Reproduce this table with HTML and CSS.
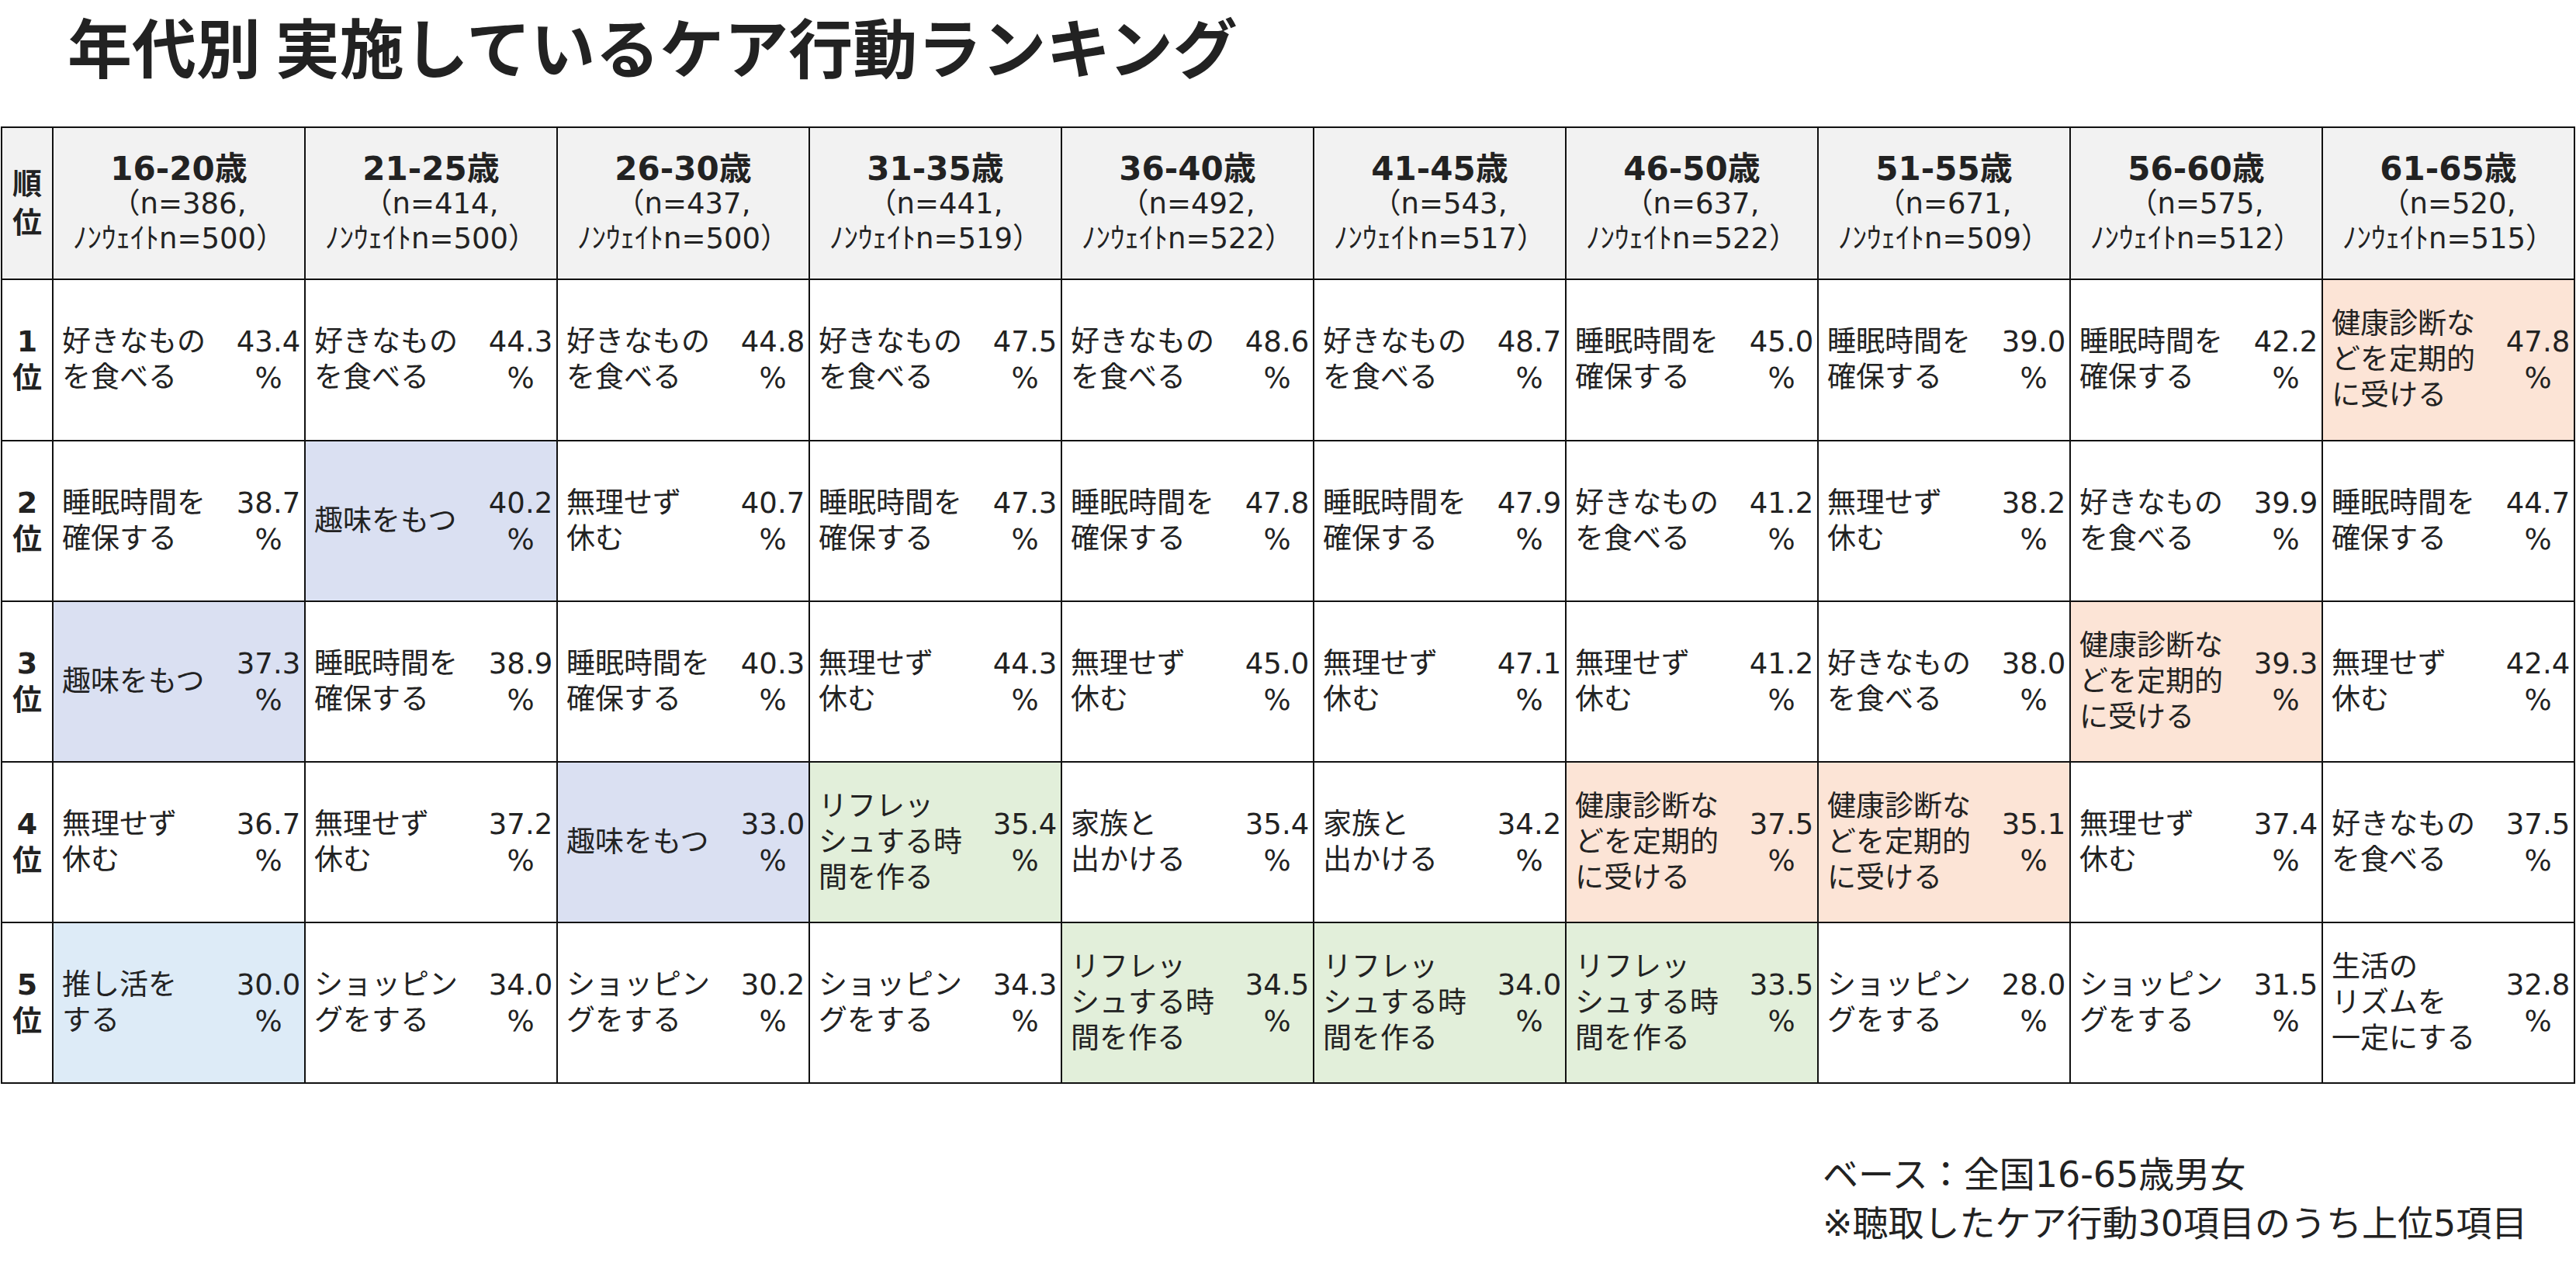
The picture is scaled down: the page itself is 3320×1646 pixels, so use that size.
FILE: index.html
```html
<!DOCTYPE html>
<html lang="ja">
<head>
<meta charset="utf-8">
<title>年代別 実施しているケア行動ランキング</title>
<link rel="stylesheet" href="styles.css">
</head>
<body>
<h1 class="title">年代別 実施しているケア行動ランキング</h1>
<div class="grid">
  <div class="rank head-bg">順<br>位</div>
  <div class="head"><span class="age">16-20歳</span><span>（n=386,</span><span>ﾉﾝｳｪｲﾄn=500）</span></div>
  <div class="head"><span class="age">21-25歳</span><span>（n=414,</span><span>ﾉﾝｳｪｲﾄn=500）</span></div>
  <div class="head"><span class="age">26-30歳</span><span>（n=437,</span><span>ﾉﾝｳｪｲﾄn=500）</span></div>
  <div class="head"><span class="age">31-35歳</span><span>（n=441,</span><span>ﾉﾝｳｪｲﾄn=519）</span></div>
  <div class="head"><span class="age">36-40歳</span><span>（n=492,</span><span>ﾉﾝｳｪｲﾄn=522）</span></div>
  <div class="head"><span class="age">41-45歳</span><span>（n=543,</span><span>ﾉﾝｳｪｲﾄn=517）</span></div>
  <div class="head"><span class="age">46-50歳</span><span>（n=637,</span><span>ﾉﾝｳｪｲﾄn=522）</span></div>
  <div class="head"><span class="age">51-55歳</span><span>（n=671,</span><span>ﾉﾝｳｪｲﾄn=509）</span></div>
  <div class="head"><span class="age">56-60歳</span><span>（n=575,</span><span>ﾉﾝｳｪｲﾄn=512）</span></div>
  <div class="head"><span class="age">61-65歳</span><span>（n=520,</span><span>ﾉﾝｳｪｲﾄn=515）</span></div>

  <div class="rank">1<br>位</div>
  <div class="cell"><div class="label">好きなもの<br>を食べる</div><div class="pct">43.4<br>%</div></div>
  <div class="cell"><div class="label">好きなもの<br>を食べる</div><div class="pct">44.3<br>%</div></div>
  <div class="cell"><div class="label">好きなもの<br>を食べる</div><div class="pct">44.8<br>%</div></div>
  <div class="cell"><div class="label">好きなもの<br>を食べる</div><div class="pct">47.5<br>%</div></div>
  <div class="cell"><div class="label">好きなもの<br>を食べる</div><div class="pct">48.6<br>%</div></div>
  <div class="cell"><div class="label">好きなもの<br>を食べる</div><div class="pct">48.7<br>%</div></div>
  <div class="cell"><div class="label">睡眠時間を<br>確保する</div><div class="pct">45.0<br>%</div></div>
  <div class="cell"><div class="label">睡眠時間を<br>確保する</div><div class="pct">39.0<br>%</div></div>
  <div class="cell"><div class="label">睡眠時間を<br>確保する</div><div class="pct">42.2<br>%</div></div>
  <div class="cell peach"><div class="label">健康診断な<br>どを定期的<br>に受ける</div><div class="pct">47.8<br>%</div></div>

  <div class="rank">2<br>位</div>
  <div class="cell"><div class="label">睡眠時間を<br>確保する</div><div class="pct">38.7<br>%</div></div>
  <div class="cell lav"><div class="label">趣味をもつ</div><div class="pct">40.2<br>%</div></div>
  <div class="cell"><div class="label">無理せず<br>休む</div><div class="pct">40.7<br>%</div></div>
  <div class="cell"><div class="label">睡眠時間を<br>確保する</div><div class="pct">47.3<br>%</div></div>
  <div class="cell"><div class="label">睡眠時間を<br>確保する</div><div class="pct">47.8<br>%</div></div>
  <div class="cell"><div class="label">睡眠時間を<br>確保する</div><div class="pct">47.9<br>%</div></div>
  <div class="cell"><div class="label">好きなもの<br>を食べる</div><div class="pct">41.2<br>%</div></div>
  <div class="cell"><div class="label">無理せず<br>休む</div><div class="pct">38.2<br>%</div></div>
  <div class="cell"><div class="label">好きなもの<br>を食べる</div><div class="pct">39.9<br>%</div></div>
  <div class="cell"><div class="label">睡眠時間を<br>確保する</div><div class="pct">44.7<br>%</div></div>

  <div class="rank">3<br>位</div>
  <div class="cell lav"><div class="label">趣味をもつ</div><div class="pct">37.3<br>%</div></div>
  <div class="cell"><div class="label">睡眠時間を<br>確保する</div><div class="pct">38.9<br>%</div></div>
  <div class="cell"><div class="label">睡眠時間を<br>確保する</div><div class="pct">40.3<br>%</div></div>
  <div class="cell"><div class="label">無理せず<br>休む</div><div class="pct">44.3<br>%</div></div>
  <div class="cell"><div class="label">無理せず<br>休む</div><div class="pct">45.0<br>%</div></div>
  <div class="cell"><div class="label">無理せず<br>休む</div><div class="pct">47.1<br>%</div></div>
  <div class="cell"><div class="label">無理せず<br>休む</div><div class="pct">41.2<br>%</div></div>
  <div class="cell"><div class="label">好きなもの<br>を食べる</div><div class="pct">38.0<br>%</div></div>
  <div class="cell peach"><div class="label">健康診断な<br>どを定期的<br>に受ける</div><div class="pct">39.3<br>%</div></div>
  <div class="cell"><div class="label">無理せず<br>休む</div><div class="pct">42.4<br>%</div></div>

  <div class="rank">4<br>位</div>
  <div class="cell"><div class="label">無理せず<br>休む</div><div class="pct">36.7<br>%</div></div>
  <div class="cell"><div class="label">無理せず<br>休む</div><div class="pct">37.2<br>%</div></div>
  <div class="cell lav"><div class="label">趣味をもつ</div><div class="pct">33.0<br>%</div></div>
  <div class="cell green"><div class="label">リフレッ<br>シュする時<br>間を作る</div><div class="pct">35.4<br>%</div></div>
  <div class="cell"><div class="label">家族と<br>出かける</div><div class="pct">35.4<br>%</div></div>
  <div class="cell"><div class="label">家族と<br>出かける</div><div class="pct">34.2<br>%</div></div>
  <div class="cell peach"><div class="label">健康診断な<br>どを定期的<br>に受ける</div><div class="pct">37.5<br>%</div></div>
  <div class="cell peach"><div class="label">健康診断な<br>どを定期的<br>に受ける</div><div class="pct">35.1<br>%</div></div>
  <div class="cell"><div class="label">無理せず<br>休む</div><div class="pct">37.4<br>%</div></div>
  <div class="cell"><div class="label">好きなもの<br>を食べる</div><div class="pct">37.5<br>%</div></div>

  <div class="rank">5<br>位</div>
  <div class="cell sky"><div class="label">推し活を<br>する</div><div class="pct">30.0<br>%</div></div>
  <div class="cell"><div class="label">ショッピン<br>グをする</div><div class="pct">34.0<br>%</div></div>
  <div class="cell"><div class="label">ショッピン<br>グをする</div><div class="pct">30.2<br>%</div></div>
  <div class="cell"><div class="label">ショッピン<br>グをする</div><div class="pct">34.3<br>%</div></div>
  <div class="cell green"><div class="label">リフレッ<br>シュする時<br>間を作る</div><div class="pct">34.5<br>%</div></div>
  <div class="cell green"><div class="label">リフレッ<br>シュする時<br>間を作る</div><div class="pct">34.0<br>%</div></div>
  <div class="cell green"><div class="label">リフレッ<br>シュする時<br>間を作る</div><div class="pct">33.5<br>%</div></div>
  <div class="cell"><div class="label">ショッピン<br>グをする</div><div class="pct">28.0<br>%</div></div>
  <div class="cell"><div class="label">ショッピン<br>グをする</div><div class="pct">31.5<br>%</div></div>
  <div class="cell"><div class="label">生活の<br>リズムを<br>一定にする</div><div class="pct">32.8<br>%</div></div>
</div>
<div class="note">
  <p class="note-line">ベース：全国16-65歳男女</p>
  <p class="note-line">※聴取したケア行動30項目のうち上位5項目</p>
</div>
</body>
</html>
```

FILE: styles.css
```css
* {
  box-sizing: border-box;
}

body {
  margin: 0;
  background: #ffffff;
  color: #222222;
  font-family: "DejaVu Sans", "Noto Sans CJK JP", sans-serif;
}

.title {
  margin: 0;
  height: 163px;
  padding-left: 87px;
  font-family: "Noto Sans CJK JP", sans-serif;
  font-weight: 700;
  font-size: 83px;
  line-height: 116px;
  color: #222222;
}

.grid {
  display: grid;
  grid-template-columns: 66px repeat(10, 325px);
  grid-template-rows: 196px 208px 207px 207px 207px 207px;
  width: max-content;
  margin-left: 1px;
  border-top: 2px solid #111111;
  border-left: 2px solid #111111;
}

.grid > div {
  border-right: 2px solid #111111;
  border-bottom: 2px solid #111111;
}

.rank {
  display: flex;
  align-items: center;
  justify-content: center;
  text-align: center;
  font-weight: 700;
  font-size: 38px;
  line-height: 47px;
}

.head-bg {
  background: #f2f2f2;
  line-height: 50px;
}

.head {
  display: flex;
  flex-direction: column;
  align-items: center;
  justify-content: center;
  background: #f2f2f2;
  font-size: 37px;
  line-height: 45px;
  white-space: nowrap;
}

.head .age {
  font-weight: 700;
  font-size: 42px;
}

.cell {
  display: flex;
  align-items: center;
  font-size: 37px;
  line-height: 46px;
}

.label {
  flex: 1;
  padding-left: 11px;
  white-space: nowrap;
}

.pct {
  width: 92px;
  text-align: center;
  line-height: 47px;
}

.lav {
  background: #dae0f2;
}

.sky {
  background: #ddebf7;
}

.green {
  background: #e2efda;
}

.peach {
  background: #fce4d6;
}

.note {
  margin-top: 86px;
  padding-left: 2349px;
  font-size: 46px;
  line-height: 63px;
}

.note-line {
  margin: 0;
  white-space: nowrap;
}
```
